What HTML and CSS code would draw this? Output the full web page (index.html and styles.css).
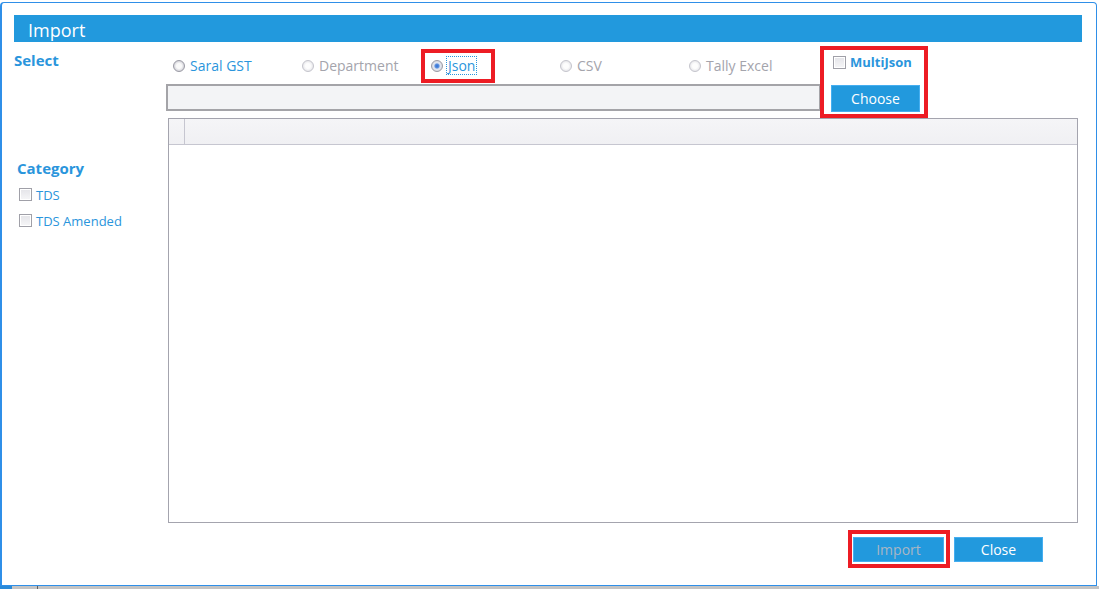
FILE: index.html
```html
<!DOCTYPE html>
<html lang="en">

<head>
    <meta charset="utf-8">
    <title>Import</title>
    <link rel="stylesheet" href="styles.css">
</head>

<body>

    <!-- CỬA SỔ IMPORT -->
    <div class="window">
        <div class="title-bar">Import</div>

        <div class="window-body">
            <aside class="sidebar">
                <div class="side-title">Select</div>
                <div class="side-title category">Category</div>
                <label class="check-row"><span class="box"></span>TDS</label>
                <label class="check-row"><span class="box"></span>TDS Amended</label>
            </aside>

            <main class="content">
                <div class="top-row">
                    <div class="top-left">
                        <div class="radio-row">
                            <label class="radio-item"><span class="radio"></span>Saral GST</label>
                            <label class="radio-item disabled"><span class="radio"></span>Department</label>
                            <label class="radio-item">
                                <span class="mark json-mark">
                                    <span class="radio checked"></span><span class="focus">Json</span>
                                </span>
                            </label>
                            <label class="radio-item disabled"><span class="radio"></span>CSV</label>
                            <label class="radio-item disabled"><span class="radio"></span>Tally Excel</label>
                        </div>
                        <div class="file-bar"></div>
                    </div>

                    <div class="mark choose-group">
                        <label class="multi"><span class="box"></span>MultiJson</label>
                        <button class="btn choose">Choose</button>
                    </div>
                </div>

                <div class="grid">
                    <div class="grid-head">
                        <div class="grid-cell first"></div>
                        <div class="grid-cell"></div>
                    </div>
                </div>

                <div class="actions">
                    <span class="mark import-mark"><button class="btn import" disabled>Import</button></span>
                    <button class="btn close">Close</button>
                </div>
            </main>
        </div>
    </div>

    <div class="taskbar"><span class="task-start"></span><span class="task-sep"></span></div>

</body>

</html>
```

FILE: styles.css
```css
* {
    box-sizing: border-box;
}

body {
    margin: 0;
    padding: 0;
    background: #fff;
    font-family: "Open Sans", "Noto Sans", sans-serif;
    color: #2a95dc;
    overflow: hidden;
}

/* Khung cửa sổ */
.window {
    margin-top: 2px;
    width: 1097px;
    height: 584px;
    border: 1px solid #2f8fe8;
    border-left-width: 2px;
    border-radius: 4px 4px 0 0;
    padding: 12px 14px 0 12px;
    background: #fff;
}

.title-bar {
    height: 27px;
    background: #2299dd;
    color: #fff;
    font-size: 18px;
    line-height: 30px;
    padding-left: 14px;
}

.window-body {
    display: flex;
}

/* Cột trái */
.sidebar {
    width: 153px;
    flex: none;
    padding-top: 8px;
}

.side-title {
    font-weight: bold;
    font-size: 15px;
    line-height: 20px;
}

.category {
    margin-top: 88px;
    padding-left: 3px;
}

.check-row {
    display: flex;
    align-items: center;
    gap: 4px;
    height: 27px;
    padding-left: 5px;
    font-size: 13px;
    margin-top: -1px;
}

.check-row:first-of-type {
    margin-top: 3px;
}

.box {
    width: 13px;
    height: 13px;
    border: 1px solid #a0a0a8;
    background: linear-gradient(#e4e4e8, #f6f6f8);
    box-shadow: inset 0 0 0 1px #fff;
    flex: none;
}

/* Nội dung bên phải */
.content {
    flex: 1;
    padding-top: 4px;
}

.top-row {
    display: flex;
}

.top-left {
    width: 653px;
}

.radio-row {
    display: flex;
    height: 38px;
    align-items: center;
    padding-left: 6px;
}

.radio-item {
    width: 129px;
    display: flex;
    align-items: center;
    gap: 5px;
    font-size: 14px;
    margin-top: 1px;
}

.radio-item.disabled {
    color: #a4a4ac;
}

.radio {
    width: 12px;
    height: 12px;
    border-radius: 50%;
    border: 1px solid #9a9aa4;
    background: radial-gradient(circle, #fafafa 35%, #d6d6dc 70%, #c0c0c8 100%);
    flex: none;
}

.disabled .radio {
    border-color: #c4c4cc;
    background: radial-gradient(circle, #fdfdfd 35%, #e6e6ea 75%);
}

.radio.checked {
    background: radial-gradient(circle, #2f6fd0 0, #5a8fe0 28%, #e4e8f0 45%, #c4c8d4 100%);
}

/* Khung đỏ đánh dấu */
.mark {
    border: 4px solid #ed1c24;
}

.json-mark {
    display: flex;
    align-items: center;
    gap: 4px;
    height: 34px;
    margin-left: -10px;
    padding: 0 15px 0 6px;
}

.focus {
    outline: 1px dotted #2a95dc;
    line-height: 17px;
    padding: 0 1px;
}

.file-bar {
    height: 27px;
    background: #f3f4f6;
    border: 1px solid #a4a4a8;
    border-width: 2px 1px 2px 2px;
    margin-left: -1px;
}

.choose-group {
    width: 108px;
    height: 72px;
    padding: 0 0 0 7px;
}

.multi {
    display: flex;
    align-items: center;
    gap: 4px;
    height: 24px;
    font-size: 13px;
    font-weight: bold;
    padding-left: 2px;
}

.btn {
    background: #2299dd;
    border: 1px solid #45aef0;
    color: #fff;
    font-family: "Open Sans", "Noto Sans", sans-serif;
    font-size: 14px;
    height: 25px;
    padding: 0;
    cursor: pointer;
}

.choose {
    width: 89px;
    height: 27px;
    margin-top: 11px;
}

/* Bảng dữ liệu */
.grid {
    width: 910px;
    height: 405px;
    border: 1px solid #a4a4ae;
    margin-left: 1px;
}

.grid-head {
    display: flex;
    height: 26px;
    background: linear-gradient(#f5f5f7, #f0f0f3);
    border-bottom: 1px solid #c6c6d0;
}

.grid-cell {
    flex: 1;
}

.grid-cell.first {
    flex: none;
    width: 16px;
    border-right: 1px solid #c6c6d0;
}

/* Nút dưới */
.actions {
    display: flex;
    justify-content: flex-end;
    align-items: center;
    gap: 4px;
    margin-top: 7px;
    padding-right: 39px;
}

.import-mark {
    display: flex;
    padding: 3px 2px 2px 1px;
}

.import {
    width: 91px;
    color: #a9b6c4;
    cursor: default;
}

.close {
    width: 89px;
}

/* Thanh dưới */
.taskbar {
    display: flex;
    height: 4px;
    background: #c4c4c4;
}

.task-start {
    width: 12px;
    background: #2a8ad8;
}

.task-sep {
    width: 1px;
    margin-left: 25px;
    background: #606060;
}
```
